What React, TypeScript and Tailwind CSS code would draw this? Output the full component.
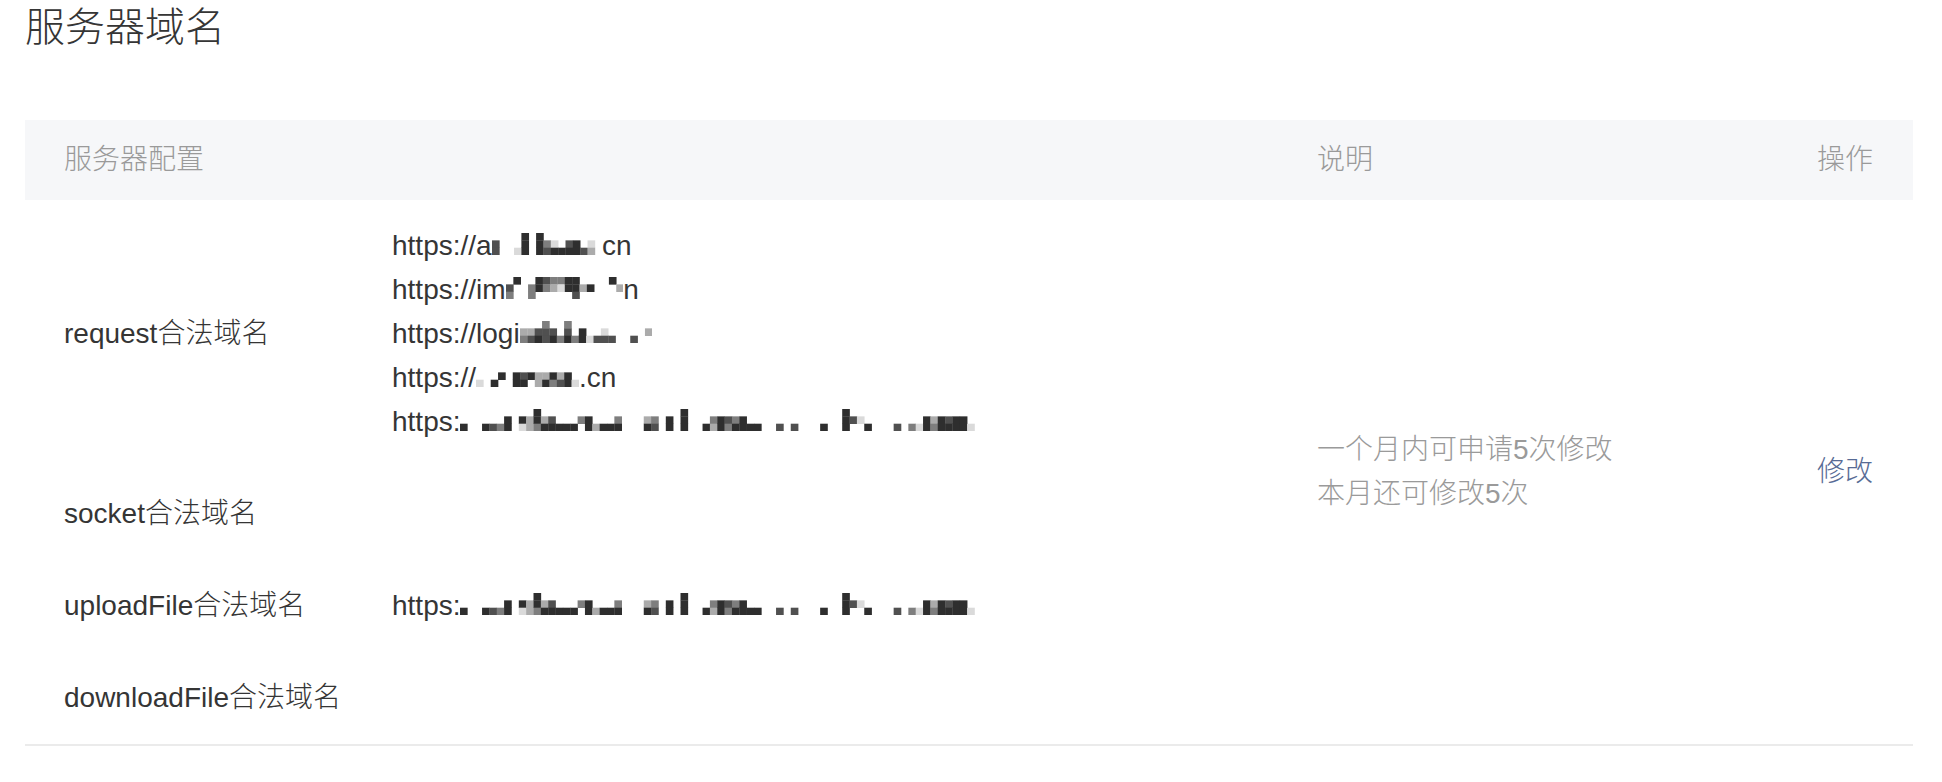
const SHADES: Record<string, string> = {
  '1': '#2e2e2e',
  '2': '#505050',
  '3': '#7e7e7e',
  '4': '#ababab',
  '5': '#dadada',
}

const CELL = 7.35

// pixelated redaction blocks, one token per column: top / middle / bottom cell
function Mosaic({ cells }: { cells: string }) {
  const cols = cells.trim().split(/\s+/)
  return (
    <svg width={cols.length * CELL} height={CELL * 3} className="inline align-baseline">
      {cols.map((col, i) =>
        col.split('').map((c, r) =>
          SHADES[c] ? (
            <rect key={`${i}-${r}`} x={i * CELL} y={r * CELL} width={CELL + 0.3} height={CELL + 0.3} fill={SHADES[c]} />
          ) : null
        )
      )}
    </svg>
  )
}

const LONG =
  '..1 ... ... ..1 ..2 ..3 .11 ... .15 .44 113 .41 .21 ..1 ..1 ..1 .3. .11 ..4 ..1 ..1 .31 ... ... ... .41 .32 ... .11 ... 111 ... ... ..1 .34 .11 .23 .31 .11 ..1 ..1 ... ... ..2 ... ..2 ... ... ... ..1 ... ... 111 .2. .5. ..1 ... ... ... ..2 ... ..3 ..5 .11 .43 .11 .21 .11 .11 ..5'

const requestUrls = [
  { pre: 'https://a', mask: '.22 ... ... ..5 111 ... 111 .32 .51 ..1 .21 .11 ..2 .54 ...', post: 'cn' },
  { pre: 'https://im', mask: '.23 1.. ... .33 11. 23. 34. 35. 11. 112 .4. .1. ... ... 1.. .4.', post: 'n' },
  { pre: 'https://logi', mask: '.43 .42 .21 322 .21 ..3 321 ..3 .11 ..5 ..2 .52 ..2 ... ... ..2 ... .4.', post: '' },
  { pre: 'https://', mask: '..5 ... ..1 .1. ... .11 .21 .1. .44 .41 .13 .42 .11 ..5', post: '.cn' },
  { pre: 'https:', mask: LONG, post: '' },
]

function Row({ label, children }: { label: string; children?: React.ReactNode }) {
  return (
    <div className="flex items-center py-[24px]">
      <div className="w-[328px] shrink-0 leading-[44px]">{label}</div>
      <div className="leading-[44px]">{children}</div>
    </div>
  )
}

export default function App() {
  return (
    <div className="min-h-[782px] w-full bg-white font-['Liberation_Sans','Noto_Sans_CJK_SC',sans-serif] font-light text-[#353535]">
      <h1 className="pl-[25px] text-[40px] leading-[54px] font-light">服务器域名</h1>

      <div className="ml-[25px] mr-[29px] mt-[66px]">
        <div className="flex h-[80px] items-center bg-[#f6f7f9] text-[28px] text-[#9a9a9a]">
          <div className="w-[1292px] shrink-0 pl-[39px]">服务器配置</div>
          <div className="flex-1">说明</div>
          <div className="pr-[40px]">操作</div>
        </div>

        <div className="flex border-b-2 border-[#ebebeb] text-[28px]">
          <div className="w-[1292px] shrink-0 pl-[39px]">
            <Row label="request合法域名">
              {requestUrls.map((u) => (
                <div key={u.pre + u.post} className="whitespace-nowrap">
                  {u.pre}
                  <Mosaic cells={u.mask} />
                  {u.post}
                </div>
              ))}
            </Row>
            <Row label="socket合法域名" />
            <Row label="uploadFile合法域名">
              <div className="whitespace-nowrap">
                https:
                <Mosaic cells={LONG} />
              </div>
            </Row>
            <Row label="downloadFile合法域名" />
          </div>

          <div className="flex flex-1 flex-col justify-center leading-[44px] text-[#9a9a9a]">
            <p>一个月内可申请5次修改</p>
            <p>本月还可修改5次</p>
          </div>

          <div className="flex items-center pr-[40px]">
            <a className="cursor-pointer text-[#576b95]">修改</a>
          </div>
        </div>
      </div>
    </div>
  )
}
